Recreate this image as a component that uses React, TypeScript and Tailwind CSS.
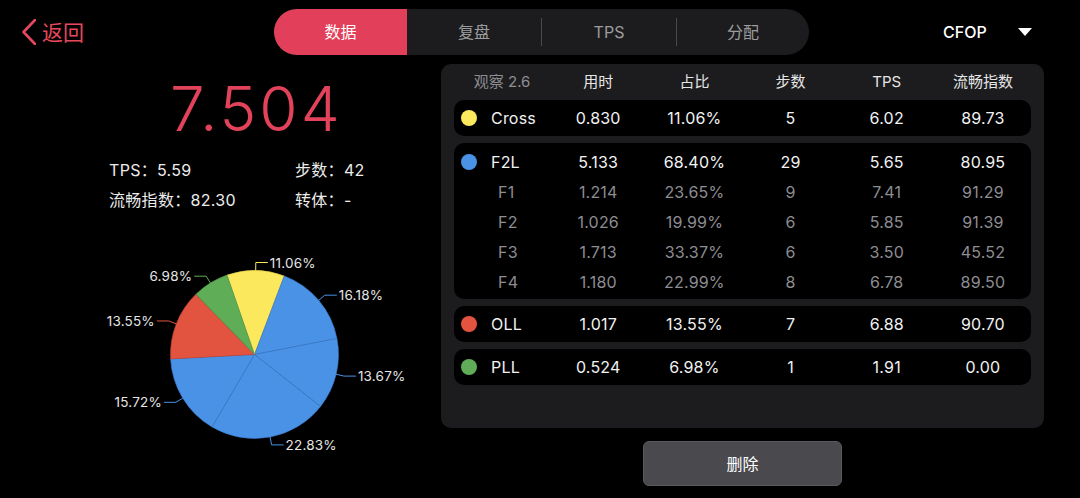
import React from "react";

const YELLOW = "#fbe85d";
const BLUE = "#4a92e6";
const RED = "#e2543f";
const GREEN = "#60ad57";

const slices = [
  { v: 11.06, c: YELLOW, s: "#e2cf4f" },
  { v: 16.18, c: BLUE, s: "#3b7ccb" },
  { v: 13.67, c: BLUE, s: "#3b7ccb" },
  { v: 22.83, c: BLUE, s: "#3b7ccb" },
  { v: 15.72, c: BLUE, s: "#3b7ccb" },
  { v: 13.55, c: RED, s: "#c9473a" },
  { v: 6.98, c: GREEN, s: "#549a4c" },
];

function Pie() {
  const cx = 254.5;
  const cy = 114.5;
  const r = 84;
  const total = slices.reduce((a, b) => a + b.v, 0);
  let a0 = -19.1;
  const rad = (d: number) => (d * Math.PI) / 180;
  const pt = (ang: number, rr: number) => [cx + rr * Math.sin(rad(ang)), cy - rr * Math.cos(rad(ang))];
  const parts = slices.map((sl, i) => {
    const sweep = (sl.v / total) * 360;
    const a1 = a0 + sweep;
    const [x0, y0] = pt(a0, r);
    const [x1, y1] = pt(a1, r);
    const large = sweep > 180 ? 1 : 0;
    const d = `M${cx},${cy} L${x0},${y0} A${r},${r} 0 ${large} 1 ${x1},${y1} Z`;
    const mid = a0 + sweep / 2;
    const [px0, py0] = pt(mid, r);
    const [px1, py1] = pt(mid, r + 8);
    const right = Math.sin(rad(mid)) >= 0;
    const px2 = right ? px1 + 12 : px1 - 12;
    a0 = a1;
    return { d, sl, px0, py0, px1, py1, px2, right, i };
  });
  return (
    <svg width="441" height="240" viewBox="0 0 441 240" className="block">
      {parts.map((p) => (
        <path key={"s" + p.i} d={p.d} fill={p.sl.c} stroke={p.sl.s} strokeWidth="0.6" />
      ))}
      {parts.map((p) => (
        <g key={"l" + p.i}>
          <polyline
            points={`${p.px0},${p.py0} ${p.px1},${p.py1} ${p.px2},${p.py1}`}
            fill="none"
            stroke={p.sl.c}
            strokeWidth="1"
          />
          <text
            x={p.right ? p.px2 + 2 : p.px2 - 2}
            y={p.py1}
            textAnchor={p.right ? "start" : "end"}
            dominantBaseline="central"
            fill="#e6e6e6"
            fontSize="13.5"
            letterSpacing="0.2"
          >
            {p.sl.v.toFixed(2)}%
          </text>
        </g>
      ))}
    </svg>
  );
}

type Row = { label: string; vals: string[]; dot?: string; sub?: boolean };

function DataRow({ r }: { r: Row }) {
  const color = r.sub ? "text-[#8d8d92]" : "text-[#f2f2f2]";
  return (
    <div className={`grid grid-cols-6 items-center h-[30px] text-[16px] tracking-[0.2px] ${color}`}>
      <div className="flex items-center">
        {r.sub ? (
          <span className="pl-[44px]">{r.label}</span>
        ) : (
          <>
            <span className="ml-[7px] w-4 h-4 rounded-full" style={{ backgroundColor: r.dot }} />
            <span className="ml-[14px]">{r.label}</span>
          </>
        )}
      </div>
      {r.vals.map((v, i) => (
        <div key={i} className="text-center">
          {v}
        </div>
      ))}
    </div>
  );
}

export default function App() {
  const cross: Row = { label: "Cross", dot: YELLOW, vals: ["0.830", "11.06%", "5", "6.02", "89.73"] };
  const f2l: Row[] = [
    { label: "F2L", dot: BLUE, vals: ["5.133", "68.40%", "29", "5.65", "80.95"] },
    { label: "F1", sub: true, vals: ["1.214", "23.65%", "9", "7.41", "91.29"] },
    { label: "F2", sub: true, vals: ["1.026", "19.99%", "6", "5.85", "91.39"] },
    { label: "F3", sub: true, vals: ["1.713", "33.37%", "6", "3.50", "45.52"] },
    { label: "F4", sub: true, vals: ["1.180", "22.99%", "8", "6.78", "89.50"] },
  ];
  const oll: Row = { label: "OLL", dot: RED, vals: ["1.017", "13.55%", "7", "6.88", "90.70"] };
  const pll: Row = { label: "PLL", dot: GREEN, vals: ["0.524", "6.98%", "1", "1.91", "0.00"] };

  return (
    <div className="w-[1080px] h-[498px] bg-black overflow-hidden text-white font-['Inter','Noto_Sans_CJK_SC',sans-serif]">
      <header className="h-16 flex items-center">
        <div className="w-[274px] flex items-center pl-[22px]">
          <svg width="14" height="26" viewBox="0 0 14 26">
            <polyline points="13,1 1.5,13 13,25" fill="none" stroke="#e5485d" strokeWidth="2.6" strokeLinecap="round" strokeLinejoin="round" />
          </svg>
          <span className="ml-[6px] text-[21px] leading-none text-[#e5485d]">返回</span>
        </div>
        <div className="w-[535px] h-[46px] rounded-full bg-[#1c1c1e] flex items-center overflow-hidden text-[16px]">
          <div className="w-[133px] h-full bg-[#e2405a] flex items-center justify-center text-white">数据</div>
          <div className="w-[134px] flex items-center justify-center text-[#9c9c9f]">复盘</div>
          <div className="w-px h-[28px] bg-[#4a4a4c]" />
          <div className="w-[134px] flex items-center justify-center text-[#9c9c9f]">TPS</div>
          <div className="w-px h-[28px] bg-[#4a4a4c]" />
          <div className="flex-1 flex items-center justify-center text-[#9c9c9f]">分配</div>
        </div>
        <div className="ml-[134px] flex items-center">
          <span className="text-[16px] font-medium">CFOP</span>
          <svg className="ml-[31px]" width="14" height="8" viewBox="0 0 14 8">
            <polygon points="0,0 14,0 7,8" fill="#ffffff" />
          </svg>
        </div>
      </header>

      <main className="flex">
        <section className="w-[441px]">
          <div className="pt-[13px] pl-[170px] text-[62px] leading-[64px] font-light text-[#e2435b] tracking-[3px]">7.504</div>
          <div className="mt-[14px] pl-[109px] grid grid-cols-[186px_auto] text-[16px] tracking-[0.3px] text-[#ececec]">
            <div className="h-[30px] flex items-center">TPS：5.59</div>
            <div className="h-[30px] flex items-center">步数：42</div>
            <div className="h-[30px] flex items-center">流畅指数：82.30</div>
            <div className="h-[30px] flex items-center">转体：-</div>
          </div>
          <div className="mt-[25px]">
            <Pie />
          </div>
        </section>

        <section className="w-[603px]">
          <div className="h-[364px] bg-[#1c1c1e] rounded-[10px] px-[13px]">
            <div className="grid grid-cols-6 items-center h-[36px] text-[15px] text-center text-[#e6e6e6]">
              <div className="text-[#8d8d92]">观察 2.6</div>
              <div>用时</div>
              <div>占比</div>
              <div>步数</div>
              <div>TPS</div>
              <div>流畅指数</div>
            </div>
            <div className="flex flex-col gap-[7px]">
              <div className="bg-black rounded-[10px] h-[36px] flex flex-col justify-center">
                <DataRow r={cross} />
              </div>
              <div className="bg-black rounded-[10px] h-[156px] pt-[4px]">
                {f2l.map((r) => (
                  <DataRow key={r.label} r={r} />
                ))}
              </div>
              <div className="bg-black rounded-[10px] h-[36px] flex flex-col justify-center">
                <DataRow r={oll} />
              </div>
              <div className="bg-black rounded-[10px] h-[36px] flex flex-col justify-center">
                <DataRow r={pll} />
              </div>
            </div>
          </div>
          <button className="block mx-auto mt-[13px] w-[199px] h-[45px] rounded-[6px] bg-[#4a4a4e] border border-[#5a5a5e] text-[16px] text-white">
            删除
          </button>
        </section>
      </main>
    </div>
  );
}
